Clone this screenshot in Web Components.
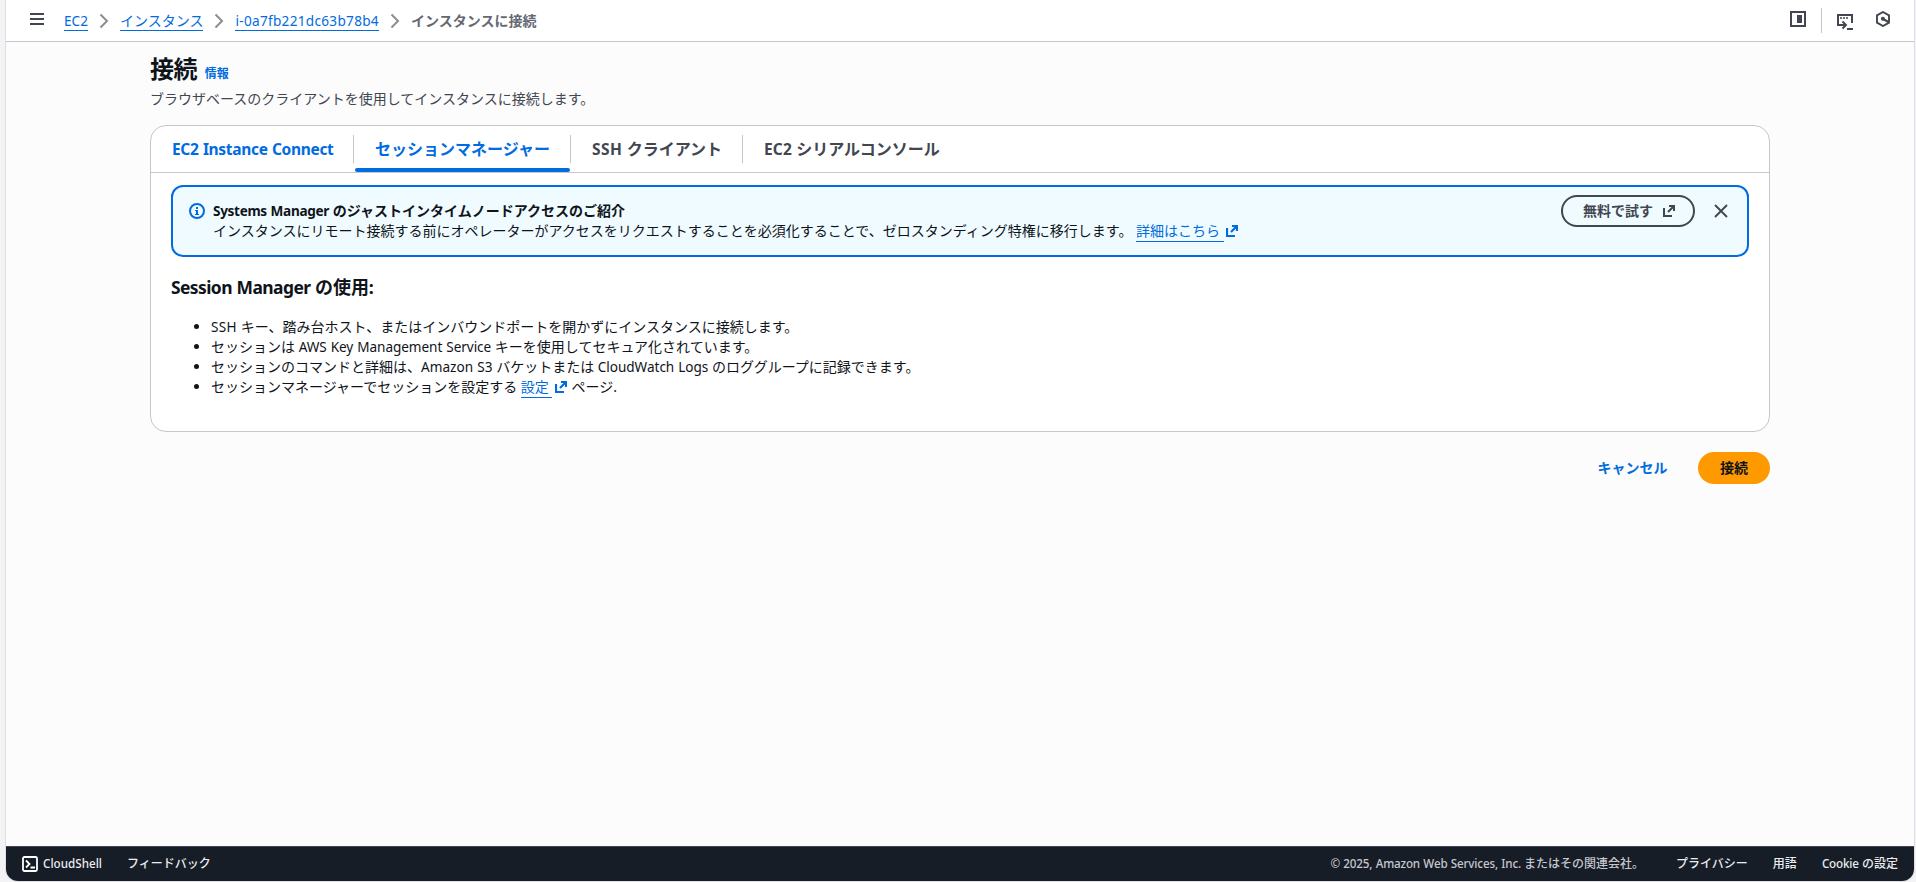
<!DOCTYPE html>
<html lang="ja">
<head>
<meta charset="utf-8">
<title>インスタンスに接続 | EC2</title>
<style>
    :root {
        --text: #0f141a;
        --text-muted: #424650;
        --link: #006ce0;
        --border: #c6c6cd;
        --page: #fcfcfd;
    }

    body {
        margin: 0;
        height: 882px;
        overflow: hidden;
        background: #f3f3f5;
        color: var(--text);
        font: 14px/20px "Noto Sans", "Noto Sans CJK JP", sans-serif;
    }
</style>
</head>
<body>
<console-frame>
    <top-bar slot="top"></top-bar>
    <page-title>接続</page-title>
    <tab-card>
        <info-alert>
            <span slot="title"><latin-run width="116">Systems Manager</latin-run> のジャストインタイムノードアクセスのご紹介</span>
            インスタンスにリモート接続する前にオペレーターがアクセスをリクエストすることを必須化することで、ゼロスタンディング特権に移行します。
            <external-link slot="link">詳細はこちら</external-link>
        </info-alert>
        <session-notes></session-notes>
    </tab-card>
    <form-actions></form-actions>
    <console-footer slot="footer"></console-footer>
</console-frame>

<script>
class BaseElement extends HTMLElement {
    constructor() {
        super();
        this.attachShadow({ mode: 'open' });
    }

    connectedCallback() {
        this.shadowRoot.innerHTML = this.template();
    }
}

class ConsoleFrame extends BaseElement {
    template() {
        return `
            <style>
                :host {
                    display: flex;
                    flex-direction: column;
                    box-sizing: border-box;
                    height: 881px;
                    margin: 0 2px 0 6px;
                    overflow: hidden;
                    background: var(--page);
                    border-radius: 0 0 12px 12px;
                    box-shadow: 0 0 0 1px #dedee3;
                }

                main {
                    flex: 1;
                    display: flex;
                    flex-direction: column;
                    width: 1620px;
                    margin: 0 auto 0 144px;
                }
            </style>
            <slot name="top"></slot>
            <main><slot></slot></main>
            <slot name="footer"></slot>
        `;
    }
}

class TopBar extends BaseElement {
    template() {
        const chevron = `
            <svg width="16" height="16" viewBox="0 0 16 16">
                <path d="M4.5 1.5 11 8l-6.500 6.500" fill="none" stroke="#8c8c94" stroke-width="2"/>
            </svg>`;

        return `
            <style>
                :host {
                    display: flex;
                    align-items: center;
                    box-sizing: border-box;
                    height: 42px;
                    padding: 0 23px 0 24px;
                    background: #fff;
                    border-bottom: 1px solid var(--border);
                }

                svg {
                    display: block;
                    flex: none;
                }

                nav {
                    display: flex;
                    align-items: center;
                    gap: 8px;
                    margin-left: 20px;
                    white-space: nowrap;
                }

                a {
                    color: var(--link);
                    box-shadow: 0 1px 0 var(--link);
                    line-height: 18px;
                    padding-top: 1px;
                }

                b {
                    color: #656871;
                }

                .tools {
                    display: flex;
                    align-items: center;
                    margin-left: auto;
                }

                .rule {
                    width: 1px;
                    height: 25px;
                    margin: 0 15px;
                    background: var(--border);
                }
            </style>
            <svg width="14" height="12" viewBox="0 0 14 12" style="margin-top:-3px">
                <path d="M0 1h14M0 6h14M0 11h14" stroke="#424650" stroke-width="2"/>
            </svg>
            <nav>
                <a><latin-run width="24">EC2</latin-run></a>${chevron}
                <a>インスタンス</a>${chevron}
                <a><latin-run width="143.5">i-0a7fb221dc63b78b4</latin-run></a>${chevron}
                <b>インスタンスに接続</b>
            </nav>
            <div class="tools">
                <svg width="16" height="16" viewBox="0 0 16 16" style="margin-top:-3px">
                    <rect x="1" y="1" width="14" height="14" fill="none" stroke="#424650" stroke-width="2"/>
                    <path d="M7 4h5v8H7z" fill="#424650"/>
                </svg>
                <span class="rule"></span>
                <svg width="16" height="16" viewBox="0 0 16 16" style="margin-top:3px">
                    <path d="M4 11H1V1h14v8" fill="none" stroke="#424650" stroke-width="2"/>
                    <path d="M3 3.200h2v1.600H3zM6 3.200h2v1.600H6zM9 3.200h2v1.600H9zM10 14h6v2h-6z" fill="#424650"/>
                    <path d="M3.500 11H9M5.500 7.500 9 11l-3.500 3.500" fill="none" stroke="#424650" stroke-width="1.900"/>
                </svg>
                <svg width="16" height="16" viewBox="0 0 16 16" style="margin:-3px 0 0 22px">
                    <path d="M8 1 14 4.400v7.200L8 15l-6-3.400V4.400z" fill="none" stroke="#424650" stroke-width="1.900"/>
                    <circle cx="7.900" cy="7.700" r="2" fill="#424650"/>
                    <path d="m8 8 5.500 3" stroke="#424650" stroke-width="2"/>
                </svg>
            </div>
        `;
    }
}

class PageTitle extends BaseElement {
    template() {
        return `
            <style>
                :host {
                    display: block;
                    height: 83px;
                }

                h1 {
                    margin: 0;
                    padding-top: 12px;
                    font-size: 24px;
                    line-height: 30px;
                    letter-spacing: -0.48px;
                }

                small {
                    margin-left: 2px;
                    color: var(--link);
                    font-size: 12px;
                    line-height: 16px;
                    letter-spacing: 0;
                }

                p {
                    margin: 5px 0 0;
                    color: var(--text-muted);
                }
            </style>
            <h1><slot></slot> <small>情報</small></h1>
            <p>ブラウザベースのクライアントを使用してインスタンスに接続します。</p>
        `;
    }
}

class TabCard extends BaseElement {
    template() {
        return `
            <style>
                :host {
                    display: block;
                    box-sizing: border-box;
                    height: 307px;
                    background: #fff;
                    border: 1px solid var(--border);
                    border-radius: 16px;
                }

                .tabs {
                    display: flex;
                    height: 46px;
                    border-bottom: 1px solid var(--border);
                    color: var(--text-muted);
                    font-size: 16px;
                    font-weight: 700;
                    white-space: nowrap;
                }

                .tab {
                    display: flex;
                    flex-direction: column;
                    box-sizing: border-box;
                }

                .label {
                    height: 28px;
                    margin-top: 9px;
                    line-height: 28px;
                    padding-left: 21px;
                    border-right: 1px solid var(--border);
                }

                .tab:last-child .label {
                    border: 0;
                }

                .link {
                    color: var(--link);
                }

                .bar {
                    height: 4px;
                    margin: 5px 1px 0;
                    border-radius: 2px;
                    background: var(--link);
                }

                .body {
                    padding: 12px 20px 0;
                }
            </style>
            <div class="tabs">
                <div class="tab link" style="width:203px"><span class="label"><latin-run width="161.5">EC2 Instance Connect</latin-run></span></div>
                <div class="tab link" style="width:217px"><span class="label">セッションマネージャー</span><i class="bar"></i></div>
                <div class="tab" style="width:172px"><span class="label"><latin-run width="30.5">SSH</latin-run> クライアント</span></div>
                <div class="tab"><span class="label"><latin-run width="28">EC2</latin-run> シリアルコンソール</span></div>
            </div>
            <div class="body"><slot></slot></div>
        `;
    }
}

class ExternalLink extends BaseElement {
    template() {
        return `
            <style>
                :host {
                    display: inline;
                    color: var(--link);
                    white-space: nowrap;
                }

                .text {
                    padding-bottom: 1px;
                    box-shadow: 0 1px 0 var(--link);
                }

                svg {
                    margin: 0 1px 0 2.5px;
                    vertical-align: -1px;
                }
            </style>
            <span class="text"><slot></slot>&nbsp;</span><svg width="12" height="12" viewBox="0 0 12 12">
                <path d="M1 3v8h8M6 1h5v5M11 1 5 7" fill="none" stroke="currentColor" stroke-width="2.200"/>
            </svg>
        `;
    }
}

class InfoAlert extends BaseElement {
    template() {
        return `
            <style>
                :host {
                    display: flex;
                    box-sizing: border-box;
                    height: 72px;
                    padding: 8px 19px 0 16px;
                    background: #f0fbff;
                    border: 2px solid var(--link);
                    border-radius: 12px;
                }

                svg {
                    display: block;
                    flex: none;
                }

                .info {
                    margin: 8px 8px 0 0;
                }

                .text {
                    flex: 1;
                    padding-top: 6px;
                    white-space: nowrap;
                }

                .title {
                    font-weight: 700;
                }

                .try {
                    display: flex;
                    align-items: center;
                    justify-content: space-between;
                    box-sizing: border-box;
                    width: 134px;
                    height: 32px;
                    padding: 0 18px 0 20px;
                    border: 2px solid var(--text-muted);
                    border-radius: 16px;
                    color: var(--text-muted);
                    font-weight: 700;
                }

                .close {
                    margin: 9px 0 0 19px;
                }
            </style>
            <svg class="info" width="16" height="16" viewBox="0 0 16 16">
                <circle cx="8" cy="8" r="7" fill="none" stroke="#006ce0" stroke-width="2"/>
                <path d="M7 4h2v2H7zM6 7h3v4h1v1H6v-1h1V8H6z" fill="#006ce0"/>
            </svg>
            <div class="text">
                <div class="title"><slot name="title"></slot></div>
                <div><slot></slot> <slot name="link"></slot></div>
            </div>
            <div class="try">無料で試す
                <svg width="12" height="12" viewBox="0 0 12 12">
                    <path d="M1 3v8h8M6 1h5v5M11 1 5 7" fill="none" stroke="currentColor" stroke-width="2"/>
                </svg>
            </div>
            <svg class="close" width="14" height="14" viewBox="0 0 14 14">
                <path d="m1 1 12 12M13 1 1 13" stroke="#424650" stroke-width="1.900"/>
            </svg>
        `;
    }
}

class SessionNotes extends BaseElement {
    template() {
        return `
            <style>
                :host {
                    display: block;
                }

                h3 {
                    margin: 19px 0;
                    font-size: 18px;
                    line-height: 22px;
                    letter-spacing: -0.1px;
                }

                ul {
                    margin: 0;
                    padding-left: 40px;
                }
            </style>
            <h3><latin-run width="139.5">Session Manager</latin-run> の使用:</h3>
            <ul>
                <li><latin-run width="26">SSH</latin-run> キー、踏み台ホスト、またはインバウンドポートを開かずにインスタンスに接続します。</li>
                <li>セッションは <latin-run width="192.5">AWS Key Management Service</latin-run> キーを使用してセキュア化されています。</li>
                <li>セッションのコマンドと詳細は、<latin-run width="71.5">Amazon S3</latin-run> バケットまたは <latin-run width="110.5">CloudWatch Logs</latin-run> のロググループに記録できます。</li>
                <li>セッションマネージャーでセッションを設定する <external-link>設定</external-link> ページ.</li>
            </ul>
        `;
    }
}

class FormActions extends BaseElement {
    template() {
        return `
            <style>
                :host {
                    display: flex;
                    justify-content: flex-end;
                    align-items: center;
                    gap: 30.5px;
                    margin-top: 20px;
                    line-height: 32px;
                    font-weight: 700;
                }

                .cancel {
                    color: var(--link);
                }

                .submit {
                    width: 72px;
                    border-radius: 16px;
                    background: #ff9900;
                    text-align: center;
                }
            </style>
            <span class="cancel">キャンセル</span>
            <span class="submit">接続</span>
        `;
    }
}

class ConsoleFooter extends BaseElement {
    template() {
        return `
            <style>
                :host {
                    display: flex;
                    align-items: center;
                    box-sizing: border-box;
                    height: 35px;
                    padding: 0 16px;
                    background: #161d26;
                    border-top: 1px solid #424650;
                    color: #ebebf0;
                    font-size: 12px;
                    line-height: 16px;
                    font-weight: 500;
                    white-space: nowrap;
                }

                svg {
                    margin-right: 5px;
                }

                .feedback {
                    margin-left: 25px;
                }

                .copy {
                    margin: 0 7px 0 auto;
                    color: #c6c6cd;
                }

                .legal {
                    margin-left: 25px;
                }
            </style>
            <svg width="16" height="16" viewBox="0 0 16 16">
                <rect x="1" y="1" width="14" height="14" rx="1.500" fill="none" stroke="#fff" stroke-width="1.800"/>
                <path d="m4 4.500 3.500 3.500L4 11.500M8.500 11.500H13" fill="none" stroke="#fff" stroke-width="1.800"/>
            </svg>
            <span><latin-run width="59">CloudShell</latin-run></span>
            <span class="feedback">フィードバック</span>
            <span class="copy"><latin-run width="190.5">© 2025, Amazon Web Services, Inc.</latin-run> またはその関連会社。</span>
            <span class="legal">プライバシー</span>
            <span class="legal">用語</span>
            <span class="legal"><latin-run width="37">Cookie</latin-run> の設定</span>
        `;
    }
}

// Tracks a run of Latin text so that it takes up the given width between the Japanese glyphs.
class LatinRun extends HTMLElement {
    constructor() {
        super();
        this.attachShadow({ mode: 'open' });
        this.shadowRoot.innerHTML = `
            <style>
                :host {
                    display: inline;
                    font-size: 0.97em;
                    word-spacing: 0.04em;
                    white-space: nowrap;
                }
            </style>
            <slot></slot>
        `.replace(/\s*\n\s*/g, '');
    }

    connectedCallback() {
        this.style.letterSpacing = '0';
        const target = Number(this.getAttribute('width'));
        const actual = this.getBoundingClientRect().width;
        const spacing = (target - actual) / this.textContent.length;
        this.style.letterSpacing = `${spacing.toFixed(3)}px`;
    }
}

customElements.define('console-frame', ConsoleFrame);
customElements.define('top-bar', TopBar);
customElements.define('page-title', PageTitle);
customElements.define('tab-card', TabCard);
customElements.define('external-link', ExternalLink);
customElements.define('info-alert', InfoAlert);
customElements.define('session-notes', SessionNotes);
customElements.define('form-actions', FormActions);
customElements.define('console-footer', ConsoleFooter);
customElements.define('latin-run', LatinRun);
</script>
</body>
</html>
